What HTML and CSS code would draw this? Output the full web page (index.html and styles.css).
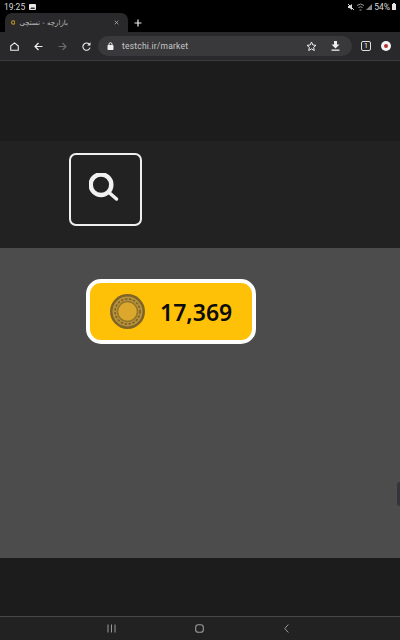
FILE: index.html
```html
<!DOCTYPE html>
<html lang="en">
<head>
  <meta charset="UTF-8">
  <title>بازارچه - تستچی</title>
  <link rel="stylesheet" href="styles.css">
</head>
<body>
  <div class="status">
    <div class="status-left">
      <span>19:25</span>
      <svg class="status-pic" width="7" height="6" viewBox="0 0 7 6"><rect width="7" height="6" rx="1" fill="#e8e8e8"/><path d="M1 5l2-2 1 1 1-1 1 2z" fill="#333"/></svg>
    </div>
    <div class="status-right">
      <svg width="8" height="8" viewBox="0 0 8 8"><path d="M1 3h1.500L5 1v6L2.500 5H1z" fill="#ddd"/><path d="M1 1l6 6" stroke="#ddd" stroke-width="1"/></svg>
      <svg width="7" height="8" viewBox="0 0 7 8"><path d="M0 2.500q3.500-3 7 0M1.500 4.500q2-1.500 4 0" stroke="#999" fill="none"/><path d="M2.500 7h2" stroke="#999"/></svg>
      <svg width="6" height="7" viewBox="0 0 6 7"><path d="M0 7L6 1v6z" fill="#888"/></svg>
      <span>54%</span>
      <svg width="4" height="7" viewBox="0 0 4 7"><path d="M1 1V0h2v1h1v6H0V1z" fill="#e4e4e4"/></svg>
    </div>
  </div>

  <div class="tabstrip">
    <div class="tab">
      <svg class="favicon" width="6" height="7" viewBox="0 0 6 7"><circle cx="3" cy="3.500" r="2.300" fill="none" stroke="#c79a1e" stroke-width="1.400"/></svg>
      <span class="tab-title" dir="rtl">بازارچه - تستچی</span>
      <svg class="tab-close" width="7" height="7" viewBox="0 0 7 7"><path d="M1 1l5 5M6 1L1 6" stroke="#bbb" stroke-width="1"/></svg>
    </div>
    <svg class="tab-new" width="8" height="8" viewBox="0 0 8 8"><path d="M4 .5v7M.5 4h7" stroke="#eee" stroke-width="1.200"/></svg>
  </div>

  <div class="toolbar">
    <svg class="tool home" width="9" height="9" viewBox="0 0 9 9"><path d="M.7 4L4.500 .8 8.300 4v4.300H.7z" fill="none" stroke="#eee" stroke-width="1.100" stroke-linejoin="round"/></svg>
    <svg class="tool back" width="9" height="9" viewBox="0 0 9 9"><path d="M8.500 4.500H1.500M4.500 1L1 4.500 4.500 8" fill="none" stroke="#eee" stroke-width="1.200"/></svg>
    <svg class="tool forward" width="9" height="9" viewBox="0 0 9 9"><path d="M.5 4.500h7M4.500 1L8 4.500 4.500 8" fill="none" stroke="#6a6a6a" stroke-width="1.200"/></svg>
    <svg class="tool reload" width="9" height="9" viewBox="0 0 9 9"><path d="M8 5.700A3.600 3.600 0 1 1 7 2" fill="none" stroke="#eee" stroke-width="1.100"/><path d="M8.500 .2v3.300H5.200z" fill="#eee"/></svg>
    <div class="omnibox">
      <svg class="lock" width="7" height="8" viewBox="0 0 7 8"><path d="M2 3.500V2.200a1.500 1.500 0 0 1 3 0v1.300" fill="none" stroke="#eee"/><rect x=".5" y="3" width="6" height="5" rx=".8" fill="#eee"/></svg>
      <span class="url">testchi.ir/market</span>
      <svg class="star" width="11" height="11" viewBox="0 0 11 11"><path d="M5.500 1l1.300 3 3.200.3-2.400 2.100.7 3.100-2.800-1.600-2.800 1.600.7-3.100L1 4.300 4.200 4z" fill="none" stroke="#eee" stroke-width="1"/></svg>
      <svg class="download" width="9" height="10" viewBox="0 0 9 10"><path d="M3 0h3v3.500h2.500L4.500 7.500.5 3.500H3z" fill="#eee"/><rect x=".5" y="8.500" width="8" height="1.300" fill="#eee"/></svg>
    </div>
    <div class="tabcount">1</div>
    <div class="avatar"><span class="avatar-dot"></span></div>
  </div>

  <div class="page">
    <div class="top-space"></div>
    <div class="search-band">
      <div class="search-box">
        <svg width="34" height="34" viewBox="0 0 34 34"><circle cx="12" cy="11.700" r="10.300" fill="none" stroke="#f1f1f1" stroke-width="4.500"/><path d="M20 19.500l7.500 6.500" stroke="#f1f1f1" stroke-width="3.500" stroke-linecap="round"/></svg>
      </div>
    </div>
    <div class="main">
      <div class="coins">
        <svg class="coin" width="35" height="35" viewBox="0 0 35 35">
          <circle cx="17.500" cy="17.500" r="17.500" fill="#7f6429"/>
          <circle cx="17.500" cy="17.500" r="15" fill="#b8933a"/>
          <circle cx="17.500" cy="17.500" r="12.500" fill="none" stroke="#7a5f26" stroke-width="1.500" stroke-dasharray="2.500 1.500"/>
          <circle cx="17.500" cy="17.500" r="10" fill="#dba72c"/>
          <circle cx="17.500" cy="17.500" r="10" fill="none" stroke="#94752c" stroke-width="1.500"/>
        </svg>
        <span class="coin-num">17,369</span>
      </div>
      <div class="scroll-tab"></div>
    </div>
    <div class="bottom-space"></div>
  </div>

  <div class="navbar">
    <svg width="9" height="9" viewBox="0 0 9 9"><path d="M1 .5v8M4.500 .5v8M8 .5v8" stroke="#9a9a9a" stroke-width="1"/></svg>
    <svg width="9" height="9" viewBox="0 0 9 9"><rect x=".7" y=".7" width="7.600" height="7.600" rx="2.600" fill="none" stroke="#9a9a9a" stroke-width="1.100"/></svg>
    <svg class="nav-back" width="5" height="9" viewBox="0 0 5 9"><path d="M4.300 .5L.8 4.500l3.500 4" fill="none" stroke="#9a9a9a" stroke-width="1"/></svg>
  </div>
</body>
</html>
```

FILE: styles.css
```css
* {
  margin: 0;
  padding: 0;
  box-sizing: border-box;
}
html, body {
  width: 400px;
  height: 640px;
  overflow: hidden;
}
body {
  display: flex;
  flex-direction: column;
  background: #000;
  font-family: "Roboto", "Noto Sans", sans-serif;
}

/* status bar */
.status {
  height: 13px;
  display: flex;
  justify-content: space-between;
  align-items: center;
  padding: 0 4px;
  font-size: 8.500px;
  color: #d8d8d8;
}
.status-left, .status-right {
  display: flex;
  align-items: center;
}
.status-left {
  gap: 4px;
}
.status-right {
  gap: 2px;
}

/* tabs */
.tabstrip {
  height: 19px;
  display: flex;
  align-items: center;
  padding-left: 5px;
}
.tab {
  width: 123px;
  height: 19px;
  display: flex;
  align-items: center;
  background: #29292b;
  border-radius: 7px 7px 0 0;
  padding: 0 9px 0 6px;
}
.tab-title {
  flex: 1;
  margin-left: 4px;
  padding-right: 46px;
  font-family: "DejaVu Sans", sans-serif;
  font-size: 7px;
  color: #bdbdbd;
  text-align: left;
  white-space: nowrap;
}
.tab-new {
  margin-left: 6px;
}

/* browser toolbar */
.toolbar {
  height: 29px;
  display: flex;
  align-items: center;
  background: #29292b;
  border-bottom: 1px solid #3c3c3c;
  padding-left: 10px;
}
.back {
  margin-left: 15px;
}
.forward {
  margin-left: 15px;
}
.reload {
  margin-left: 15px;
}
.omnibox {
  width: 254px;
  height: 20px;
  margin-left: 7px;
  display: flex;
  align-items: center;
  background: #39393b;
  border-radius: 10px;
  padding: 0 12px 0 9px;
}
.url {
  flex: 1;
  margin-left: 8px;
  font-size: 8.500px;
  letter-spacing: .2px;
  color: #c8c8c8;
}
.download {
  margin-left: 14px;
}
.tabcount {
  width: 10px;
  height: 10px;
  margin-left: 9px;
  border: 1px solid #ddd;
  border-radius: 2px;
  font-size: 7px;
  line-height: 8px;
  text-align: center;
  color: #eee;
}
.avatar {
  width: 10px;
  height: 10px;
  margin-left: 10px;
  display: flex;
  align-items: center;
  justify-content: center;
  background: #f4f4f4;
  border-radius: 50%;
}
.avatar-dot {
  width: 4px;
  height: 4px;
  background: #b5332e;
  border-radius: 50%;
}

/* page */
.page {
  flex: 1;
  display: flex;
  flex-direction: column;
}
.top-space {
  height: 80px;
  background: #1c1c1c;
}
.search-band {
  height: 107px;
  background: #222;
  padding: 12px 0 0 69px;
}
.search-box {
  width: 73px;
  height: 73px;
  display: flex;
  align-items: center;
  justify-content: center;
  border: 2px solid #efefef;
  border-radius: 7px;
}
.main {
  position: relative;
  height: 310px;
  background: #4c4c4c;
  padding: 31px 0 0 86px;
}
.coins {
  width: 170px;
  height: 65px;
  display: flex;
  align-items: center;
  background: #ffc107;
  border: 4px solid #fff;
  border-radius: 15px;
  padding-left: 20px;
}
.coin-num {
  margin-left: 15px;
  font-family: "Noto Sans", "Roboto", sans-serif;
  font-size: 23px;
  font-weight: 600;
  color: #0c0c0c;
}
.scroll-tab {
  position: absolute;
  right: 0;
  top: 234px;
  width: 3px;
  height: 24px;
  background: #34343a;
  border-radius: 3px 0 0 3px;
}
.bottom-space {
  flex: 1;
  background: #1c1c1c;
}

/* android nav */
.navbar {
  height: 24px;
  display: flex;
  align-items: center;
  background: #222;
  border-top: 1px solid #484848;
  padding-left: 107px;
  gap: 79px;
}
.nav-back {
  margin-left: 1px;
}
```
